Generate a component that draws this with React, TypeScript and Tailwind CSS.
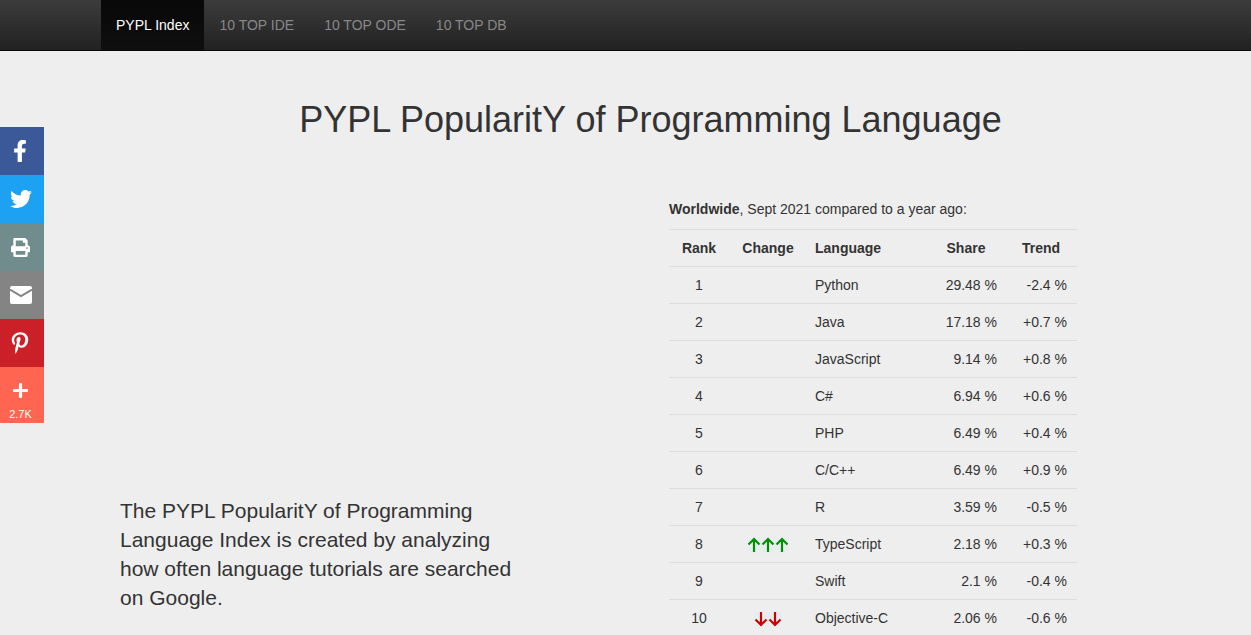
import React from 'react';
import { FaFacebookF, FaPinterestP, FaPlus, FaPrint, FaTwitter } from 'react-icons/fa';

const navItems = ['10 TOP IDE', '10 TOP ODE', '10 TOP DB'];

const rows = [
  { rank: 1, up: 0, down: 0, lang: 'Python', share: '29.48 %', trend: '-2.4 %' },
  { rank: 2, up: 0, down: 0, lang: 'Java', share: '17.18 %', trend: '+0.7 %' },
  { rank: 3, up: 0, down: 0, lang: 'JavaScript', share: '9.14 %', trend: '+0.8 %' },
  { rank: 4, up: 0, down: 0, lang: 'C#', share: '6.94 %', trend: '+0.6 %' },
  { rank: 5, up: 0, down: 0, lang: 'PHP', share: '6.49 %', trend: '+0.4 %' },
  { rank: 6, up: 0, down: 0, lang: 'C/C++', share: '6.49 %', trend: '+0.9 %' },
  { rank: 7, up: 0, down: 0, lang: 'R', share: '3.59 %', trend: '-0.5 %' },
  { rank: 8, up: 3, down: 0, lang: 'TypeScript', share: '2.18 %', trend: '+0.3 %' },
  { rank: 9, up: 0, down: 0, lang: 'Swift', share: '2.1 %', trend: '-0.4 %' },
  { rank: 10, up: 0, down: 2, lang: 'Objective-C', share: '2.06 %', trend: '-0.6 %' },
];

const Arrow = ({ down }: { down?: boolean }) => (
  <svg width="14" height="16" viewBox="0 0 14 16" fill="none" stroke={down ? '#d00000' : '#009000'} strokeWidth="2.2">
    {down ? <path d="M7 1v13M1.5 8.5 7 14l5.5-5.5" /> : <path d="M7 15V2M1.5 7.5 7 2l5.5 5.5" />}
  </svg>
);

const Arrows = ({ count, down }: { count: number; down?: boolean }) => (
  <span className="inline-flex align-middle bg-[#e8eef0]">
    {Array.from({ length: count }).map((_, i) => (
      <Arrow key={i} down={down} />
    ))}
  </span>
);

const MailIcon = () => (
  <svg width="22" height="18" viewBox="0 0 22 18">
    <rect width="22" height="18" rx="2" fill="#ffffff" />
    <path d="M0 3.5 11 10 22 3.5" fill="none" stroke="#848484" strokeWidth="2" />
  </svg>
);

const Social = () => (
  <div className="absolute left-0 top-[127px] w-[44px] pr-0 text-white">
    <div className="h-[48px] flex items-center justify-center pr-[4px] bg-[#3b5998]"><FaFacebookF size={22} /></div>
    <div className="h-[48px] flex items-center justify-center pr-[3px] bg-[#1da1f2]"><FaTwitter size={22} /></div>
    <div className="h-[48px] flex items-center justify-center pr-[3px] bg-[#708c8c]"><FaPrint size={19} /></div>
    <div className="h-[48px] flex items-center justify-center pr-[3px] bg-[#848484]"><MailIcon /></div>
    <div className="h-[48px] flex items-center justify-center pr-[4px] bg-[#cb2027]"><FaPinterestP size={22} /></div>
    <div className="h-[56px] flex flex-col items-center pt-[15px] pr-[4px] bg-[#ff6550]">
      <FaPlus size={17} />
      <span className="text-[11px] leading-none mt-[10px] pl-[1px]">2.7K</span>
    </div>
  </div>
);

export default function App() {
  return (
    <div className="relative h-screen overflow-hidden bg-[#eeeeee] text-[#333333] text-sm font-['Liberation_Sans',Arial,sans-serif]">
      <nav className="h-[51px] border-b border-[#080808] bg-gradient-to-b from-[#3c3c3c] to-[#222222] pl-[101px] flex">
        <a className="h-[50px] px-[15px] flex items-center text-white bg-gradient-to-b from-[#080808] to-[#0f0f0f]">PYPL Index</a>
        {navItems.map(item => (
          <a key={item} className="h-[50px] px-[15px] flex items-center text-[#888888]">{item}</a>
        ))}
      </nav>

      <Social />

      <main className="pl-[101px] w-[1200px]">
        <h1 className="text-[36px] leading-[40px] text-center mt-[49px]">PYPL PopularitY of Programming Language</h1>

        <div className="flex mt-[59px]">
          <div className="w-[568px] pl-[19px] pt-[297px]">
            <p className="text-[21px] leading-[29px] w-[410px]">
              The PYPL PopularitY of Programming Language Index is created by analyzing how often language tutorials are searched on Google.
            </p>
          </div>

          <div className="w-[408px]">
            <p className="leading-[20px] mb-[10px]"><b>Worldwide</b>, Sept 2021 compared to a year ago:</p>
            <table className="w-[408px] table-fixed border-collapse">
              <thead>
                <tr className="h-[37px] border-y border-[#dddddd] font-bold">
                  <th className="w-[60px] text-center">Rank</th>
                  <th className="w-[78px] text-center">Change</th>
                  <th className="w-[120px] text-left pl-[8px]">Language</th>
                  <th className="w-[78px] text-center">Share</th>
                  <th className="w-[72px] text-center">Trend</th>
                </tr>
              </thead>
              <tbody>
                {rows.map(row => (
                  <tr key={row.rank} className="h-[37px] border-b border-[#dddddd]">
                    <td className="text-center">{row.rank}</td>
                    <td className="text-center">
                      {row.up > 0 && <Arrows count={row.up} />}
                      {row.down > 0 && <Arrows count={row.down} down />}
                    </td>
                    <td className="pl-[8px]">{row.lang}</td>
                    <td className="text-right pr-[8px]">{row.share}</td>
                    <td className="text-right pr-[10px]">{row.trend}</td>
                  </tr>
                ))}
              </tbody>
            </table>
          </div>
        </div>
      </main>
    </div>
  );
}
